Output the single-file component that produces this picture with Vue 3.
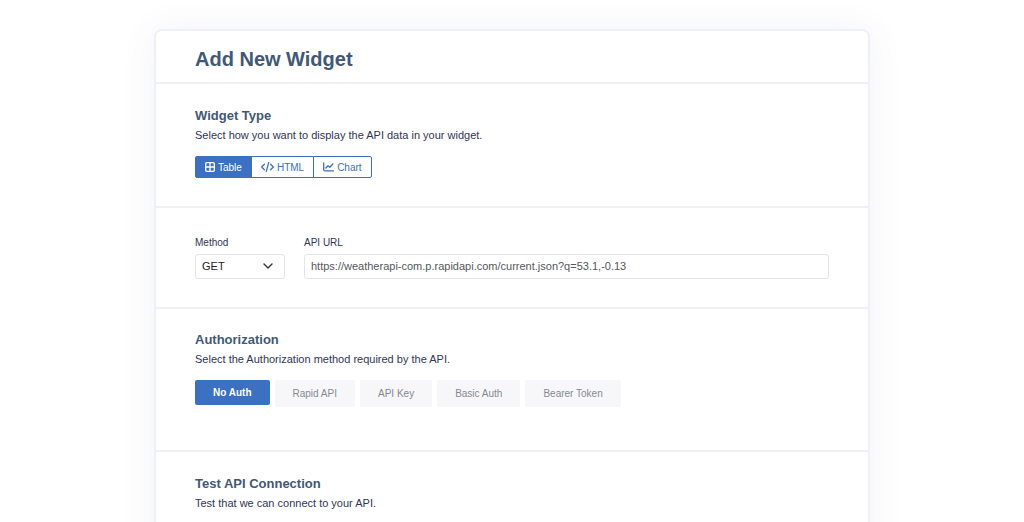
<script setup>
import { ref } from 'vue'

const widgetType = ref('Table')
const method = ref('GET')
const url = ref('https://weatherapi-com.p.rapidapi.com/current.json?q=53.1,-0.13')
const auth = ref('No Auth')
const authMethods = ['No Auth', 'Rapid API', 'API Key', 'Basic Auth', 'Bearer Token']
</script>

<template>
  <main class="page">
    <form class="card" @submit.prevent>
      <header class="card-header">
        <h1>Add New Widget</h1>
      </header>

      <section class="section type-section">
        <h2>Widget Type</h2>
        <p>Select how you want to display the API data in your widget.</p>
        <div class="type-group">
          <button type="button" :class="{ active: widgetType === 'Table' }" @click="widgetType = 'Table'">
            <svg class="icon" viewBox="0 0 10 10" width="10" height="10" aria-hidden="true">
              <rect x="0.7" y="0.7" width="8.6" height="8.6" rx="1" />
              <path d="M5 0.7V9.3M0.7 5H9.3" />
            </svg>
            <span>Table</span>
          </button>
          <button type="button" :class="{ active: widgetType === 'HTML' }" @click="widgetType = 'HTML'">
            <svg class="icon" viewBox="0 0 13 10" width="13" height="10" aria-hidden="true">
              <path d="M3.4 2.2L0.7 5L3.4 7.8M9.6 2.2L12.3 5L9.6 7.8M7.7 0.6L5.3 9.4" />
            </svg>
            <span>HTML</span>
          </button>
          <button type="button" :class="{ active: widgetType === 'Chart' }" @click="widgetType = 'Chart'">
            <svg class="icon" viewBox="0 0 11 10" width="11" height="10" aria-hidden="true">
              <path d="M0.7 0.8V7.6Q0.7 8.9 2 8.9H10.4M2.8 6L5 3.7L6.8 5.2L9.8 2" />
            </svg>
            <span>Chart</span>
          </button>
        </div>
      </section>

      <section class="section request-section">
        <div class="field method-field">
          <label for="method">Method</label>
          <div class="select-wrap">
            <select id="method" v-model="method">
              <option>GET</option>
              <option>POST</option>
            </select>
            <svg class="chevron" viewBox="0 0 10 6" width="10" height="6" aria-hidden="true">
              <path d="M1 1L5 5L9 1" />
            </svg>
          </div>
        </div>
        <div class="field url-field">
          <label for="url">API URL</label>
          <input id="url" v-model="url" type="text" />
        </div>
      </section>

      <section class="section auth-section">
        <h2>Authorization</h2>
        <p>Select the Authorization method required by the API.</p>
        <div class="auth-group">
          <button
            v-for="name in authMethods"
            :key="name"
            type="button"
            :class="{ active: auth === name }"
            @click="auth = name"
          >{{ name }}</button>
        </div>
      </section>

      <section class="section test-section">
        <h2>Test API Connection</h2>
        <p>Test that we can connect to your API.</p>
      </section>
    </form>
  </main>
</template>

<style>
html {
  scrollbar-width: none;
}
body {
  background: #fff;
}
</style>

<style scoped>
.page {
  padding: 29px 20px;
  font-family: "Liberation Sans", Arial, sans-serif;
  font-size: 11px;
  color: #2f3556;
}
.card {
  box-sizing: border-box;
  max-width: 716px;
  margin: 0 auto;
  background: #fff;
  border: 2px solid #efeff6;
  border-radius: 8px;
  box-shadow: 0 0 36px rgba(70, 80, 150, 0.07);
}
.card-header {
  padding: 16px 39px 11px;
  border-bottom: 2px solid #efeff6;
}
h1,
h2,
p {
  margin: 0;
}
h1 {
  font-size: 20px;
  line-height: 24px;
  color: #415878;
}
h2 {
  font-size: 13px;
  line-height: 16px;
  color: #415878;
}
p {
  margin-top: 4px;
  font-size: 11px;
  line-height: 14px;
}
.section {
  padding: 24px 39px 28px;
  border-bottom: 2px solid #efeff6;
}
button,
input,
select {
  box-sizing: border-box;
  margin: 0;
  font-family: inherit;
}
button {
  cursor: pointer;
}
.type-group {
  display: flex;
  margin-top: 14px;
}
.type-group button {
  display: flex;
  align-items: center;
  gap: 3px;
  height: 22px;
  padding: 0 9px;
  font-size: 10px;
  color: #3b70c3;
  background: #fff;
  border: 1px solid #3b70c3;
}
.type-group button + button {
  margin-left: -1px;
}
.type-group button:first-child {
  border-radius: 2px 0 0 2px;
}
.type-group button:last-child {
  border-radius: 0 2px 2px 0;
}
.type-group .active {
  color: #fff;
  background: #3b70c3;
}
.icon {
  fill: none;
  stroke: currentColor;
  stroke-width: 1.3;
  stroke-linecap: round;
  stroke-linejoin: round;
}
.request-section {
  display: flex;
  gap: 19px;
  padding-top: 28px;
}
.field {
  display: flex;
  flex-direction: column;
  gap: 5px;
}
.method-field {
  width: 90px;
}
.url-field {
  flex: 1;
}
label {
  font-size: 10px;
  line-height: 13px;
}
.select-wrap {
  position: relative;
}
select,
input {
  display: block;
  width: 100%;
  height: 25px;
  padding: 0 6px 2px;
  font-size: 11px;
  color: #55585c;
  background: #fff;
  border: 1px solid #e4e5ea;
  border-radius: 3px;
}
select {
  appearance: none;
  color: #222;
}
.chevron {
  position: absolute;
  top: 9px;
  right: 12px;
  fill: none;
  stroke: #333;
  stroke-width: 1.4;
  stroke-linecap: round;
  stroke-linejoin: round;
  pointer-events: none;
}
.auth-section {
  padding-top: 23px;
  padding-bottom: 43px;
}
.auth-group {
  display: flex;
  align-items: flex-start;
  gap: 5px;
  margin-top: 14px;
}
.auth-group button {
  height: 27px;
  padding: 0 18px;
  font-size: 10px;
  color: #84898f;
  background: #f7f7fa;
  border: 0;
  border-radius: 2px;
}
.auth-group .active {
  height: 25px;
  font-weight: 700;
  color: #fff;
  background: #3b70c3;
}
.test-section {
  border-bottom: 0;
  padding-bottom: 60px;
}
</style>
